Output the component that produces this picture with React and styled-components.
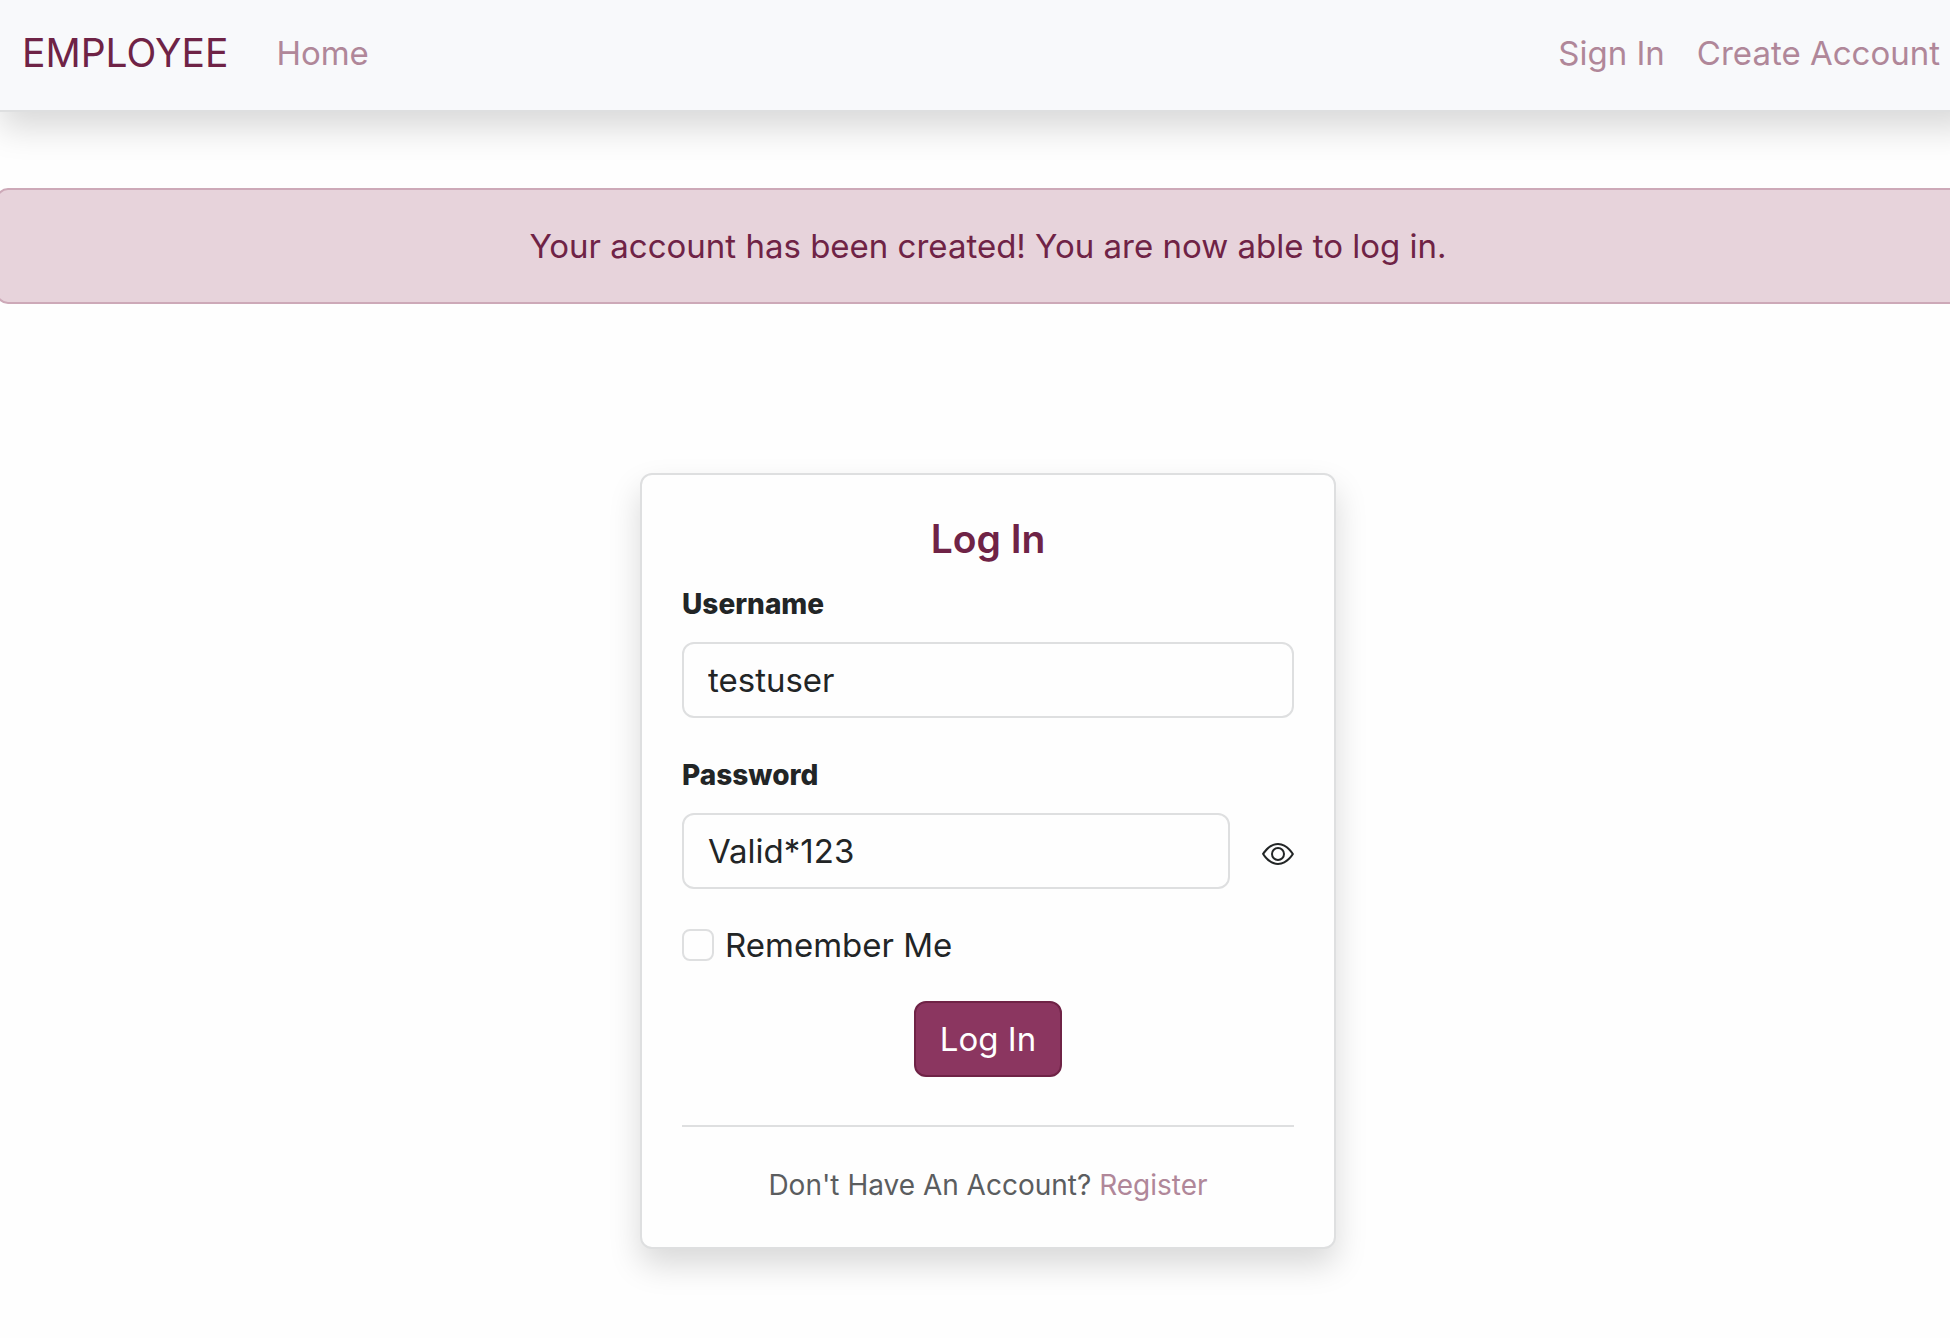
import React, { useState } from "react";
import styled, { createGlobalStyle } from "styled-components";
import { BsEye } from "react-icons/bs";

const color = {
  brand: "#6f2346",
  link: "#b08799",
  text: "#222526",
  muted: "#5b5d5f",
  border: "#dedfe0",
  page: "#fefefe",
};

const GlobalStyle = createGlobalStyle`
  *, *::before, *::after { box-sizing: border-box; }
  body {
    margin: 0;
    background: ${color.page};
    color: ${color.text};
    font-family: Inter, "Liberation Sans", sans-serif;
    font-size: 33px;
    line-height: 48px;
    overflow-x: hidden;
  }
`;

const Page = styled.div`
  margin-right: -26px;
  padding-bottom: 64px;
`;

const Navbar = styled.nav`
  display: flex;
  align-items: center;
  height: 112px;
  padding: 0 36px 4px 22px;
  background: #f8f9fb;
  border-bottom: 2px solid ${color.border};
  box-shadow: 0 16px 32px rgba(0, 0, 0, 0.15);
`;

const Brand = styled.a`
  margin-right: 48px;
  color: ${color.brand};
  font-size: 39px;
  line-height: 60px;
  text-decoration: none;
`;

const NavLinks = styled.div`
  display: flex;
  gap: 32px;
  margin-left: ${(p) => (p.$end ? "auto" : "0")};
`;

const Link = styled.a`
  color: ${color.link};
  text-decoration: none;
`;

const Alert = styled.div`
  margin: 76px -4px 0;
  padding: 32px;
  border: 2px solid #cda9b8;
  border-radius: 12px;
  background: #e7d3db;
  color: ${color.brand};
  text-align: center;
`;

const Card = styled.main`
  width: 696px;
  max-width: 100%;
  margin: 169px auto 0;
  padding: 40px;
  border: 2px solid ${color.border};
  border-radius: 12px;
  background: ${color.page};
  box-shadow: 0 16px 32px rgba(0, 0, 0, 0.15);
`;

const Title = styled.h1`
  margin: 0 0 20px;
  color: ${color.brand};
  font-size: 39px;
  font-weight: 600;
  line-height: 48px;
  text-align: center;
`;

const Field = styled.div`
  margin-bottom: ${(p) => p.$gap}px;
`;

const Label = styled.label`
  display: block;
  margin-bottom: 17px;
  font-size: 28px;
  font-weight: 800;
  line-height: 42px;
`;

const InputRow = styled.div`
  display: flex;
  gap: 32px;
`;

const Input = styled.input`
  flex: 1;
  width: 100%;
  min-width: 0;
  height: 76px;
  padding: 0 24px;
  border: 2px solid ${color.border};
  border-radius: 12px;
  background: ${color.page};
  color: inherit;
  font: inherit;
  outline: none;
`;

const EyeButton = styled.button`
  display: flex;
  align-items: center;
  padding: 6px 0 0;
  border: 0;
  background: none;
  color: inherit;
  font-size: 32px;
  cursor: pointer;
`;

const CheckRow = styled.label`
  display: flex;
  align-items: center;
  gap: 11px;
  margin-bottom: 32px;
`;

const Checkbox = styled.input`
  appearance: none;
  width: 32px;
  height: 32px;
  margin: 0;
  border: 2px solid ${color.border};
  border-radius: 8px;
  background: ${color.page};

  &:checked {
    background: #8b3660;
  }
`;

const Submit = styled.button`
  display: block;
  height: 76px;
  margin: 0 auto 48px;
  padding: 0 24px;
  border: 2px solid ${color.brand};
  border-radius: 12px;
  background: #8b3660;
  color: #ffffff;
  font: inherit;
  cursor: pointer;
`;

const Footer = styled.footer`
  padding-top: 36px;
  border-top: 2px solid ${color.border};
  color: ${color.muted};
  font-size: 28px;
  line-height: 44px;
  text-align: center;
`;

export default function App() {
  const [username, setUsername] = useState("testuser");
  const [password, setPassword] = useState("Valid*123");
  const [visible, setVisible] = useState(true);

  return (
    <Page>
      <GlobalStyle />
      <Navbar>
        <Brand href="#">EMPLOYEE</Brand>
        <NavLinks>
          <Link href="#home">Home</Link>
        </NavLinks>
        <NavLinks $end>
          <Link href="#signin">Sign In</Link>
          <Link href="#create">Create Account</Link>
        </NavLinks>
      </Navbar>

      <Alert role="alert">
        Your account has been created! You are now able to log in.
      </Alert>

      <Card>
        <form onSubmit={(e) => e.preventDefault()}>
          <Title>Log In</Title>
          <Field $gap={36}>
            <Label htmlFor="username">Username</Label>
            <InputRow>
              <Input
                id="username"
                value={username}
                onChange={(e) => setUsername(e.target.value)}
              />
            </InputRow>
          </Field>
          <Field $gap={32}>
            <Label htmlFor="password">Password</Label>
            <InputRow>
              <Input
                id="password"
                type={visible ? "text" : "password"}
                value={password}
                onChange={(e) => setPassword(e.target.value)}
              />
              <EyeButton
                type="button"
                aria-label="Toggle password visibility"
                onClick={() => setVisible(!visible)}
              >
                <BsEye />
              </EyeButton>
            </InputRow>
          </Field>
          <CheckRow>
            <Checkbox type="checkbox" />
            Remember Me
          </CheckRow>
          <Submit type="submit">Log In</Submit>
        </form>
        <Footer>
          Don't Have An Account? <Link href="#register">Register</Link>
        </Footer>
      </Card>
    </Page>
  );
}
